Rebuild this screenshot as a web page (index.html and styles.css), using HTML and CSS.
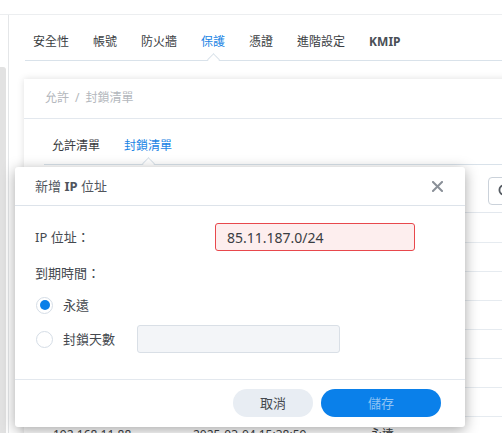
FILE: index.html
```html
<!DOCTYPE html>
<html lang="zh-Hant">
<head>
<meta charset="utf-8">
<title>保護 - 封鎖清單</title>
<link rel="stylesheet" href="styles.css">
</head>
<body>
<div class="topbar"></div>
<div class="layout">
  <aside class="sidebar"><div class="thumb"></div></aside>
  <main class="main">
    <nav class="tabs">
      <span class="tab">安全性</span>
      <span class="tab">帳號</span>
      <span class="tab">防火牆</span>
      <span class="tab active">保護</span>
      <span class="tab">憑證</span>
      <span class="tab">進階設定</span>
      <span class="tab strong">KMIP</span>
    </nav>
    <section class="card">
      <div class="crumb">允許<span class="sep">/</span>封鎖清單</div>
      <nav class="tabs subtabs">
        <span class="tab">允許清單</span>
        <span class="tab active">封鎖清單</span>
      </nav>
      <div class="toolbar">
        <div class="tool-buttons"><button class="tool-btn">新增</button><button class="tool-btn">刪除</button></div>
        <div class="search">
          <svg class="search-icon" width="14" height="14" viewBox="0 0 14 14"><circle cx="6" cy="6" r="4.6" fill="none" stroke="#555b62" stroke-width="1.8"/><path d="M9.4 9.4 L13 13" stroke="#555b62" stroke-width="1.8" stroke-linecap="round"/></svg>
        </div>
      </div>
      <div class="table">
        <div class="thead"><span class="c1">IP 位址</span><span class="c2">新增時間</span><span class="c3">到期時間</span></div>
        <div class="row"><span class="c1">10.0.0.15</span><span class="c2">2025-02-11 09:12:40</span><span class="c3">永遠</span></div>
        <div class="row"><span class="c1">172.16.4.23</span><span class="c2">2025-02-14 18:20:03</span><span class="c3">永遠</span></div>
        <div class="row"><span class="c1">45.83.64.0/24</span><span class="c2">2025-02-20 11:05:17</span><span class="c3">永遠</span></div>
        <div class="row"><span class="c1">103.21.244.9</span><span class="c2">2025-02-25 07:44:31</span><span class="c3">永遠</span></div>
        <div class="row"><span class="c1">198.51.100.7</span><span class="c2">2025-02-28 22:13:09</span><span class="c3">永遠</span></div>
        <div class="row"><span class="c1">203.0.113.45</span><span class="c2">2025-03-02 13:50:26</span><span class="c3">永遠</span></div>
        <div class="row last"><span class="c1">192.168.11.88</span><span class="c2">2025-03-04 15:38:59</span><span class="c3">永遠</span></div>
      </div>
    </section>
  </main>
</div>

<div class="modal" role="dialog">
  <header class="modal-head">
    <h2 class="modal-title">新增 <b>IP</b> 位址</h2>
    <button class="close" aria-label="關閉">
      <svg width="11" height="11" viewBox="0 0 11 11"><path d="M1 1 L10 10 M10 1 L1 10" stroke="#8a9098" stroke-width="2" stroke-linecap="square"/></svg>
    </button>
  </header>
  <div class="modal-body">
    <div class="field">
      <label class="field-label">IP 位址：</label>
      <input class="text-input invalid" type="text" value="85.11.187.0/24">
    </div>
    <div class="section-label">到期時間：</div>
    <label class="radio-row"><span class="radio checked"></span><span class="radio-text">永遠</span></label>
    <label class="radio-row"><span class="radio"></span><span class="radio-text">封鎖天數</span><input class="text-input days" type="text" disabled></label>
  </div>
  <footer class="modal-foot">
    <button class="btn cancel">取消</button>
    <button class="btn primary">儲存</button>
  </footer>
</div>
</body>
</html>
```
FILE: styles.css
```css
* { box-sizing: border-box; }

body {
  margin: 0;
  width: 502px;
  height: 433px;
  overflow: hidden;
  position: relative;
  background: #fff;
  font-family: "Noto Sans", "Noto Sans CJK TC", sans-serif;
  color: #3a3d42;
}

.topbar {
  height: 15px;
  border-bottom: 1px solid #eceef0;
}

.layout {
  display: flex;
  height: 418px;
  overflow: hidden;
}

.sidebar {
  width: 9px;
  flex: none;
  border-right: 1px solid #e4e6e8;
  padding-top: 52px;
}

.thumb {
  width: 6px;
  height: 100%;
  background: #e2e2e2;
  border-top-right-radius: 3px;
}

.main {
  flex: 1;
  padding-left: 15px;
  min-width: 0;
  overflow: hidden;
}

/* tabs */
.tabs {
  display: flex;
  gap: 24px;
  margin-left: 1px;
  padding: 18px 8px 9px;
  border-bottom: 1px solid #d9e2ea;
  font-size: 12px;
  line-height: 18px;
  white-space: nowrap;
}

.tab {
  position: relative;
  color: #3a3d42;
}

.tab.strong { font-weight: 700; color: #4a4f56; }

.tab.active { color: #1a84e4; }

.tab.active::after {
  content: "";
  position: absolute;
  left: 50%;
  bottom: -13px;
  width: 8px;
  height: 8px;
  margin-left: -4px;
  background: #fff;
  border-top: 1px solid #d9e2ea;
  border-left: 1px solid #d9e2ea;
  transform: rotate(45deg);
}

/* card */
.card {
  width: 664px;
  margin-top: 18px;
  background: #fff;
  box-shadow: 0 0 7px rgba(0, 0, 0, 0.13);
  height: 400px;
}

.crumb {
  height: 40px;
  padding: 10px 21px 0;
  border-bottom: 1px solid #e3e8ee;
  font-size: 12px;
  line-height: 18px;
  color: #b4b8bd;
}

.sep { margin: 0 6px; }

.subtabs {
  margin: 0 0 0 20px;
}

.toolbar {
  height: 48px;
  display: flex;
  align-items: flex-start;
  justify-content: space-between;
  padding: 12px 20px 0 20px;
  border-bottom: 1px solid #e3e8ee;
}

.tool-buttons { display: flex; gap: 8px; }

.tool-btn {
  height: 28px;
  padding: 0 16px;
  border: none;
  border-radius: 14px;
  background: #e8edf3;
  font: inherit;
  font-size: 12px;
}

.search {
  width: 180px;
  height: 28px;
  border: 1px solid #cbd2da;
  border-radius: 4px;
  padding: 6px 0 0 9px;
}

.search-icon { display: block; }

.table {
  margin: 0 20px;
  font-size: 12px;
  line-height: 16px;
}

.thead, .row {
  display: flex;
  align-items: center;
  padding-left: 9px;
  border-bottom: 1px solid #e6ebf0;
  white-space: nowrap;
}

.thead { height: 30px; color: #777; }
.row { height: 29px; color: #3a3d42; }
.row.last { padding-top: 8px; }

.c1 { width: 140px; }
.c2 { width: 177px; }
.c3 { width: 60px; }

/* modal */
.modal {
  position: absolute;
  left: 15px;
  top: 167px;
  width: 450px;
  height: 260px;
  background: #fff;
  border-radius: 3px;
  box-shadow: 0 3px 14px rgba(0, 0, 0, 0.35);
  display: flex;
  flex-direction: column;
}

.modal-head {
  height: 39px;
  flex: none;
  display: flex;
  align-items: center;
  justify-content: space-between;
  padding: 0 22px 0 20px;
  border-bottom: 1px solid #dde3ea;
}

.modal-title {
  margin: 0;
  font-size: 13px;
  line-height: 18px;
  font-weight: 400;
  color: #50555c;
}

.modal-title b { font-weight: 700; }

.close {
  border: none;
  background: none;
  padding: 0;
  width: 11px;
  height: 11px;
  display: flex;
}

.modal-body {
  flex: 1;
  padding: 17px 20px 0;
  font-size: 13px;
  line-height: 18px;
  color: #45494f;
}

.field {
  display: flex;
  align-items: center;
  height: 28px;
}

.field-label { width: 180px; flex: none; }

.text-input {
  height: 28px;
  border-radius: 3px;
  font-family: "Noto Sans", sans-serif;
  font-size: 14px;
  color: #3a3d42;
  outline: none;
}

.text-input.invalid {
  width: 200px;
  padding: 0 11px;
  border: 1px solid #e8484c;
  background: #fdeeee;
}

.section-label {
  margin-top: 12px;
  height: 20px;
  line-height: 20px;
}

.radio-row {
  display: flex;
  align-items: center;
  height: 28px;
}

.radio-row:first-of-type { margin-top: 8px; }
.radio-row + .radio-row { margin-top: 6px; }

.radio {
  width: 17px;
  height: 17px;
  margin-left: 1px;
  border: 1px solid #d5dde6;
  border-radius: 50%;
  background: #fff;
  display: flex;
  align-items: center;
  justify-content: center;
  flex: none;
}

.radio.checked::before {
  content: "";
  width: 10px;
  height: 10px;
  border-radius: 50%;
  background: #0a7fe8;
}

.radio-text { margin-left: 10px; }

.text-input.days {
  width: 203px;
  margin-left: 22px;
  border: 1px solid #d9dfe6;
  background: #f3f5f8;
}

.modal-foot {
  flex: none;
  display: flex;
  justify-content: flex-end;
  gap: 8px;
  padding: 9px 24px 10px;
  border-top: 1px solid #e3e8ee;
}

.btn {
  height: 28px;
  border: none;
  border-radius: 14px;
  font-family: "Noto Sans", "Noto Sans CJK TC", sans-serif;
  font-size: 13px;
  line-height: 18px;
  padding: 0;
}

.btn.cancel { width: 80px; background: #e8edf3; color: #44484e; }
.btn.primary { width: 120px; background: #0a80ea; color: #8fc3f4; }
```
